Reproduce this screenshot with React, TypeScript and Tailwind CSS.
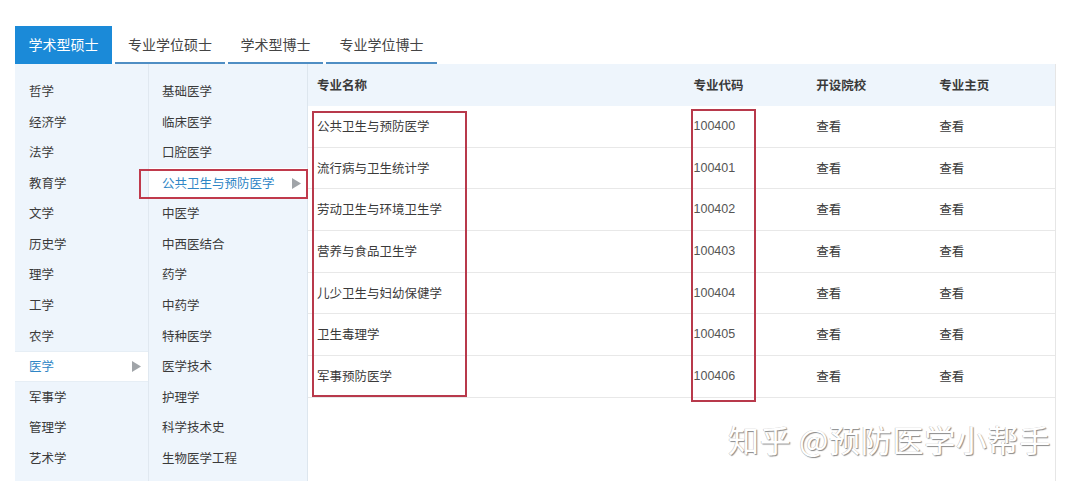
import React from "react";

const left = ["哲学","经济学","法学","教育学","文学","历史学","理学","工学","农学","医学","军事学","管理学","艺术学"];
const mid = ["基础医学","临床医学","口腔医学","公共卫生与预防医学","中医学","中西医结合","药学","中药学","特种医学","医学技术","护理学","科学技术史","生物医学工程"];
const rows = [
  ["公共卫生与预防医学","100400"],
  ["流行病与卫生统计学","100401"],
  ["劳动卫生与环境卫生学","100402"],
  ["营养与食品卫生学","100403"],
  ["儿少卫生与妇幼保健学","100404"],
  ["卫生毒理学","100405"],
  ["军事预防医学","100406"],
];

const Tri = () => (
  <svg width="9" height="11" viewBox="0 0 9 11"><polygon points="0,0 9,5.5 0,11" fill="#a0a4a8" /></svg>
);

export default function App() {
  return (
    <div className="relative w-[1080px] h-[481px] overflow-hidden bg-white text-[12.5px] text-[#3a3a3a]" style={{ fontFamily: '"Noto Sans CJK SC", "Noto Sans", sans-serif' }}>
      <div className="pl-[15px] pt-[26px]">
        <div className="flex h-[38px] gap-[3px] text-[14px]">
          <div className="w-[97px] bg-[#1b8ad8] text-white flex items-center justify-center pb-[2px]">学术型硕士</div>
          <div className="w-[110px] border-b-2 border-[#4f8ec4] flex items-center justify-center text-[#444]">专业学位硕士</div>
          <div className="w-[95px] border-b-2 border-[#4f8ec4] flex items-center justify-center text-[#444]">学术型博士</div>
          <div className="w-[111px] border-b-2 border-[#4f8ec4] flex items-center justify-center text-[#444]">专业学位博士</div>
        </div>
        <div className="flex h-[417px]">
          <div className="w-[134px] bg-[#eef5fc] pt-[12px] border-r border-[#e0e8f0]">
            {left.map((t) => (
              <div key={t} className={`h-[30.6px] flex items-center justify-between pl-[14px] pr-[7px] ${t === "医学" ? "bg-white text-[#2f86c6] border-y border-[#e6eef5]" : ""}`}>
                <span>{t}</span>
                {t === "医学" && <Tri />}
              </div>
            ))}
          </div>
          <div className="w-[159px] bg-[#eef5fc] pt-[12px] border-r border-[#dde6ee]">
            {mid.map((t) => (
              <div key={t} className={`h-[30.6px] flex items-center justify-between pl-[13px] pr-[6px] ${t === "公共卫生与预防医学" ? "bg-white text-[#2f86c6]" : ""}`}>
                <span>{t}</span>
                {t === "公共卫生与预防医学" && <Tri />}
              </div>
            ))}
          </div>
          <div className="w-[748px] border-r border-[#e6e6e6]">
            <div className="flex h-[42px] items-center bg-[#eef5fc] font-bold">
              <div className="w-[377px] pl-[9px]">专业名称</div>
              <div className="w-[123px] pl-[9px]">专业代码</div>
              <div className="w-[123px] pl-[9px]">开设院校</div>
              <div className="w-[125px] pl-[9px]">专业主页</div>
            </div>
            {rows.map(([n, c]) => (
              <div key={c} className="flex h-[41.7px] items-center border-b border-[#e8e8e8]">
                <div className="w-[377px] pl-[9px]">{n}</div>
                <div className="w-[123px] pl-[9px] text-[#555]" style={{ fontFamily: '"Liberation Sans", sans-serif' }}>{c}</div>
                <div className="w-[123px] pl-[9px]">查看</div>
                <div className="w-[125px] pl-[9px]">查看</div>
              </div>
            ))}
          </div>
        </div>
      </div>
      <div className="absolute left-[139px] top-[169px] w-[169px] h-[30px] border-2 border-[#c03a4c]" />
      <div className="absolute left-[312px] top-[111px] w-[155px] h-[286px] border-2 border-[#b8394b]" />
      <div className="absolute left-[691px] top-[109px] w-[65px] h-[293px] border-2 border-[#b8394b]" />
      <div className="absolute left-[728px] top-[416px] text-[31px] text-white tracking-[0.7px]" style={{ textShadow: "1px 1px 1px #8a8a8a, -0.5px -0.5px 0.5px #bbb" }}>知乎 @预防医学小帮手</div>
    </div>
  );
}
